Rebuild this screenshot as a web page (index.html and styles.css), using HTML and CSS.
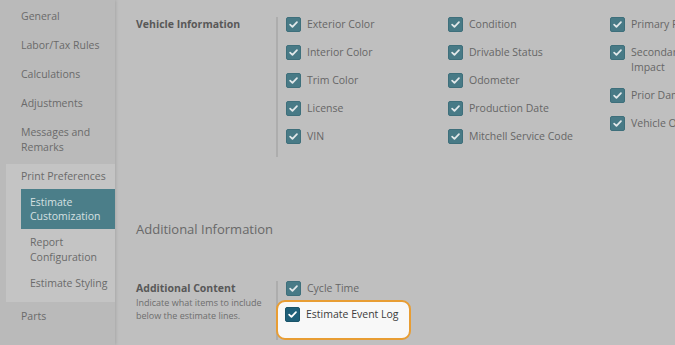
FILE: index.html
```html
<!DOCTYPE html>
<html lang="en">
<head>
    <meta charset="UTF-8">
    <meta name="viewport" content="width=device-width, initial-scale=1.0">
    <title>Estimate Customization</title>
    <link rel="stylesheet" href="styles.css">
</head>
<body>
    <div class="page">
        <!-- Settings navigation -->
        <nav class="sidebar">
            <a class="nav-item">General</a>
            <a class="nav-item">Labor/Tax Rules</a>
            <a class="nav-item">Calculations</a>
            <a class="nav-item">Adjustments</a>
            <a class="nav-item">Messages and Remarks</a>
            <div class="nav-group">
                <div class="nav-group-title">Print Preferences</div>
                <a class="sub-item active">Estimate Customization</a>
                <a class="sub-item">Report Configuration</a>
                <a class="sub-item">Estimate Styling</a>
            </div>
            <a class="nav-item">Parts</a>
        </nav>

        <main class="content">
            <!-- Vehicle Information -->
            <section class="setting">
                <div class="setting-label">
                    <h3>Vehicle Information</h3>
                </div>
                <div class="setting-options">
                    <div class="opt-col">
                        <label class="opt"><span class="box"><svg viewBox="0 0 15 15"><path d="M3.6 7.6l2.7 2.7 5.2-5.6"/></svg></span><span class="opt-text">Exterior Color</span></label>
                        <label class="opt"><span class="box"><svg viewBox="0 0 15 15"><path d="M3.6 7.6l2.7 2.7 5.2-5.6"/></svg></span><span class="opt-text">Interior Color</span></label>
                        <label class="opt"><span class="box"><svg viewBox="0 0 15 15"><path d="M3.6 7.6l2.7 2.7 5.2-5.6"/></svg></span><span class="opt-text">Trim Color</span></label>
                        <label class="opt"><span class="box"><svg viewBox="0 0 15 15"><path d="M3.6 7.6l2.7 2.7 5.2-5.6"/></svg></span><span class="opt-text">License</span></label>
                        <label class="opt"><span class="box"><svg viewBox="0 0 15 15"><path d="M3.6 7.6l2.7 2.7 5.2-5.6"/></svg></span><span class="opt-text">VIN</span></label>
                    </div>
                    <div class="opt-col">
                        <label class="opt"><span class="box"><svg viewBox="0 0 15 15"><path d="M3.6 7.6l2.7 2.7 5.2-5.6"/></svg></span><span class="opt-text">Condition</span></label>
                        <label class="opt"><span class="box"><svg viewBox="0 0 15 15"><path d="M3.6 7.6l2.7 2.7 5.2-5.6"/></svg></span><span class="opt-text">Drivable Status</span></label>
                        <label class="opt"><span class="box"><svg viewBox="0 0 15 15"><path d="M3.6 7.6l2.7 2.7 5.2-5.6"/></svg></span><span class="opt-text">Odometer</span></label>
                        <label class="opt"><span class="box"><svg viewBox="0 0 15 15"><path d="M3.6 7.6l2.7 2.7 5.2-5.6"/></svg></span><span class="opt-text">Production Date</span></label>
                        <label class="opt"><span class="box"><svg viewBox="0 0 15 15"><path d="M3.6 7.6l2.7 2.7 5.2-5.6"/></svg></span><span class="opt-text">Mitchell Service Code</span></label>
                    </div>
                    <div class="opt-col">
                        <label class="opt"><span class="box"><svg viewBox="0 0 15 15"><path d="M3.6 7.6l2.7 2.7 5.2-5.6"/></svg></span><span class="opt-text">Primary Point of Impact</span></label>
                        <label class="opt"><span class="box"><svg viewBox="0 0 15 15"><path d="M3.6 7.6l2.7 2.7 5.2-5.6"/></svg></span><span class="opt-text">Secondary Point of Impact</span></label>
                        <label class="opt"><span class="box"><svg viewBox="0 0 15 15"><path d="M3.6 7.6l2.7 2.7 5.2-5.6"/></svg></span><span class="opt-text">Prior Damage</span></label>
                        <label class="opt"><span class="box"><svg viewBox="0 0 15 15"><path d="M3.6 7.6l2.7 2.7 5.2-5.6"/></svg></span><span class="opt-text">Vehicle Options</span></label>
                    </div>
                </div>
            </section>

            <h2 class="section-title">Additional Information</h2>

            <!-- Additional Content -->
            <section class="setting">
                <div class="setting-label">
                    <h3>Additional Content</h3>
                    <p>Indicate what items to include below the estimate lines.</p>
                </div>
                <div class="setting-options">
                    <div class="opt-col">
                        <label class="opt"><span class="box"><svg viewBox="0 0 15 15"><path d="M3.6 7.6l2.7 2.7 5.2-5.6"/></svg></span><span class="opt-text">Cycle Time</span></label>
                        <label class="opt spotlight"><span class="box"><svg viewBox="0 0 15 15"><path d="M3.6 7.6l2.7 2.7 5.2-5.6"/></svg></span><span class="opt-text">Estimate Event Log</span></label>
                    </div>
                </div>
            </section>
        </main>
    </div>
</body>
</html>
```

FILE: styles.css
```css
html, body {
    margin: 0;
    height: 100%;
    overflow: hidden;
}

body {
    background-color: #bfbfbf;
    color: #666666;
    font-family: "Open Sans", "Liberation Sans", sans-serif;
    font-size: 10.5px;
    line-height: 15px;
}

.page {
    display: flex;
    height: 100%;
}

/* sidebar */
.sidebar {
    width: 115px;
    flex-shrink: 0;
    padding-top: 2px;
    background-color: #bababa;
    box-shadow: 1px 0 3px rgba(0, 0, 0, 0.12);
    position: relative;
    z-index: 1;
}

.nav-item {
    display: block;
    padding: 7px 8px 7px 21px;
    color: #6a6a6a;
}

.nav-group {
    margin: 2px 0 0 6px;
    padding-bottom: 6px;
    background-color: #c4c4c4;
}

.nav-group-title {
    padding: 5px 0 5px 15px;
    color: #6a6a6a;
}

.sub-item {
    display: block;
    margin-left: 15px;
    padding: 6px 4px 5px 9px;
    color: #6a6a6a;
}

.sub-item.active {
    padding: 6px 4px 6px 9px;
    line-height: 14px;
    background-color: #4b7e89;
    color: #d6e0e2;
}

/* main area */
.content {
    flex: 1;
    min-width: 0;
    padding: 17px 0 0 21px;
}

.setting {
    display: flex;
}

.setting-label {
    width: 140px;
    flex-shrink: 0;
}

.setting-label h3 {
    margin: 0;
    font-size: 10.5px;
    font-weight: 700;
    color: #585858;
}

.setting-label p {
    margin: 0;
    padding-right: 8px;
    font-size: 9px;
    line-height: 13px;
    color: #6e6e6e;
}

.setting-options {
    display: flex;
    border-left: 2px solid #adadad;
    padding-left: 8px;
}

.opt-col {
    width: 162px;
    flex-shrink: 0;
    display: flex;
    flex-direction: column;
    align-items: flex-start;
}

.opt {
    display: flex;
    align-items: flex-start;
    gap: 6px;
    margin-bottom: 13px;
}

.opt-text {
    max-width: 120px;
}

.box {
    width: 15px;
    height: 15px;
    flex-shrink: 0;
    box-sizing: border-box;
    border: 1px solid #3e6f7b;
    border-radius: 2px;
    background-color: #487a86;
}

.box svg {
    display: block;
    width: 13px;
    height: 13px;
    fill: none;
    stroke: #e2e8ea;
    stroke-width: 2;
    stroke-linecap: round;
    stroke-linejoin: round;
}

.section-title {
    margin: 62px 0 42px;
    font-size: 13px;
    font-weight: 400;
    line-height: 20px;
    color: #686868;
}

/* highlighted option */
.spotlight {
    margin: -9px 0 0 -10px;
    padding: 5px 10px 16px 7px;
    border: 2px solid #e89d33;
    border-radius: 9px;
    background-color: #f8f8f8;
    color: #3c3c3c;
}

.spotlight .box {
    background-color: #1e5f79;
    border-color: #1a5469;
}

.spotlight .box svg {
    stroke: #ffffff;
}
```
